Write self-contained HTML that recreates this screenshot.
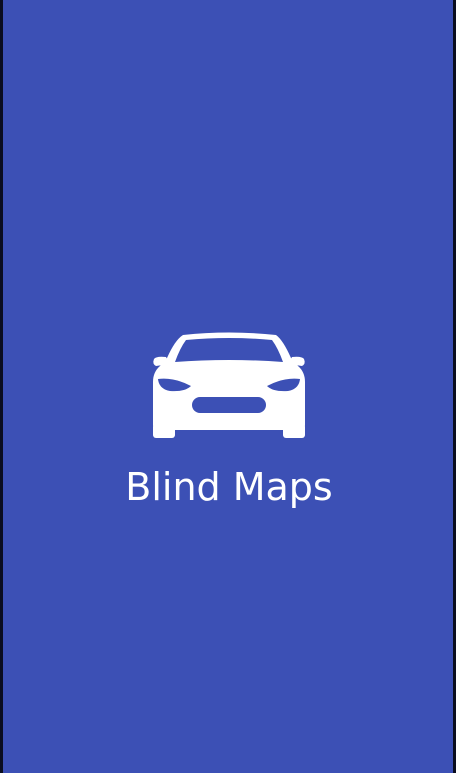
<!DOCTYPE html>
<html><head><meta charset="utf-8"><style>
html,body{margin:0;padding:0;}
body{width:456px;height:773px;background:#3c50b5;position:relative;overflow:hidden;font-family:"DejaVu Sans",sans-serif;}
.l{position:absolute;left:0;top:0;width:3px;height:773px;background:#0a0d20;}
.r{position:absolute;right:0;top:0;width:3px;height:773px;background:#0a0d20;}
svg{position:absolute;left:0;top:0;}
.t{position:absolute;left:0;width:458px;top:465px;text-align:center;color:#fff;font-size:38px;letter-spacing:0px;}
</style></head><body>
<div class="l"></div><div class="r"></div>
<svg width="456" height="773" viewBox="0 0 456 773">
<g fill="#fff">
<path d="M183,335 Q229,330 276,335 Q283,340 291,358 L298,366 Q305,372 305,382 L305,425 Q305,430 298,430 L160,430 Q153,430 153,425 L153,382 Q153,372 160,366 L167,358 Q175,340 183,335 Z"/>
<path d="M154,359 Q156,356 166,357 L170,364 L156,366 Q152,364 154,359 Z"/>
<path d="M304,359 Q302,356 292,357 L288,364 L302,366 Q306,364 304,359 Z"/>
<rect x="153" y="424" width="22" height="14" rx="3"/>
<rect x="283" y="424" width="22" height="14" rx="3"/>
</g>
<g fill="#3c50b5">
<path d="M186,340 Q229,336 272,340 Q278,348 283,362 Q229,358 175,362 Q180,348 186,340 Z"/>
<path d="M158,379 Q174,377 191,386 Q185,392 170,391 Q159,389 158,379 Z"/>
<path d="M300,379 Q284,377 267,386 Q273,392 288,391 Q299,389 300,379 Z"/>
<rect x="192" y="397" width="74" height="16" rx="8"/>
</g>
</svg>
<div class="t">Blind Maps</div>
</body></html>
